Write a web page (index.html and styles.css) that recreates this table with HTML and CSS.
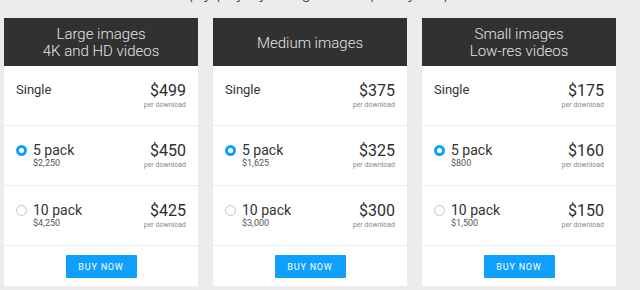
FILE: index.html
```html
<!DOCTYPE html>
<html lang="en">
<head>
    <meta charset="UTF-8">
    <meta name="viewport" content="width=device-width, initial-scale=1.0">
    <title>Pricing</title>
    <link rel="stylesheet" href="styles.css">
</head>
<body>
    <p class="intro">Simply pay by image size, quality, or pack</p>

    <div class="plans">
        <div class="plan">
            <div class="plan-head">Large images<br>4K and HD videos</div>
            <div class="option">
                <div class="option-name">Single</div>
                <div class="price"><span class="amount">$499</span><span class="unit">per download</span></div>
            </div>
            <div class="option">
                <span class="radio checked"></span>
                <div class="pack"><span class="pack-name">5 pack</span><span class="pack-total">$2,250</span></div>
                <div class="price"><span class="amount">$450</span><span class="unit">per download</span></div>
            </div>
            <div class="option">
                <span class="radio"></span>
                <div class="pack"><span class="pack-name">10 pack</span><span class="pack-total">$4,250</span></div>
                <div class="price"><span class="amount">$425</span><span class="unit">per download</span></div>
            </div>
            <div class="plan-foot"><button class="buy">BUY NOW</button></div>
        </div>

        <div class="plan">
            <div class="plan-head">Medium images</div>
            <div class="option">
                <div class="option-name">Single</div>
                <div class="price"><span class="amount">$375</span><span class="unit">per download</span></div>
            </div>
            <div class="option">
                <span class="radio checked"></span>
                <div class="pack"><span class="pack-name">5 pack</span><span class="pack-total">$1,625</span></div>
                <div class="price"><span class="amount">$325</span><span class="unit">per download</span></div>
            </div>
            <div class="option">
                <span class="radio"></span>
                <div class="pack"><span class="pack-name">10 pack</span><span class="pack-total">$3,000</span></div>
                <div class="price"><span class="amount">$300</span><span class="unit">per download</span></div>
            </div>
            <div class="plan-foot"><button class="buy">BUY NOW</button></div>
        </div>

        <div class="plan">
            <div class="plan-head">Small images<br>Low-res videos</div>
            <div class="option">
                <div class="option-name">Single</div>
                <div class="price"><span class="amount">$175</span><span class="unit">per download</span></div>
            </div>
            <div class="option">
                <span class="radio checked"></span>
                <div class="pack"><span class="pack-name">5 pack</span><span class="pack-total">$800</span></div>
                <div class="price"><span class="amount">$160</span><span class="unit">per download</span></div>
            </div>
            <div class="option">
                <span class="radio"></span>
                <div class="pack"><span class="pack-name">10 pack</span><span class="pack-total">$1,500</span></div>
                <div class="price"><span class="amount">$150</span><span class="unit">per download</span></div>
            </div>
            <div class="plan-foot"><button class="buy">BUY NOW</button></div>
        </div>
    </div>
</body>
</html>
```

FILE: styles.css
```css
:root {
    --bg-color: #ececec;
    --card-bg: #ffffff;
    --head-bg: #313131;
    --head-text: #e4e4e4;
    --text-primary: #333333;
    --text-muted: #8a8a8a;
    --border-color: #ececec;
    --accent: #0ea0fc;
}

* {
    margin: 0;
    padding: 0;
    box-sizing: border-box;
    font-family: Roboto, "Liberation Sans", sans-serif;
}

body {
    background-color: var(--bg-color);
    color: var(--text-primary);
    padding: 0 4px;
    overflow: hidden;
}

.intro {
    margin-top: -17px;
    height: 18px;
    font-size: 18px;
    line-height: 18px;
    font-weight: 300;
    text-align: center;
    color: #444;
}

.plans {
    display: grid;
    grid-template-columns: repeat(3, 194px);
    column-gap: 15px;
    margin-top: 17px;
}

.plan {
    background-color: var(--card-bg);
}

.plan-head {
    height: 48px;
    background-color: var(--head-bg);
    color: var(--head-text);
    font-size: 15px;
    font-weight: 300;
    line-height: 17px;
    text-align: center;
    display: flex;
    align-items: center;
    justify-content: center;
    padding-top: 2px;
}

.option {
    height: 60px;
    border-bottom: 1px solid var(--border-color);
    display: flex;
    align-items: flex-start;
    padding: 16px 12px 0 12px;
}

.option-name {
    font-size: 13px;
    line-height: 16px;
    flex: 1;
}

.radio {
    width: 11px;
    height: 11px;
    margin-top: 3px;
    margin-right: 6px;
    border-radius: 50%;
    border: 1px solid #c4c4c4;
    flex-shrink: 0;
}

.radio.checked {
    border: 3px solid var(--accent);
}

.pack {
    flex: 1;
    display: flex;
    flex-direction: column;
}

.pack-name {
    font-size: 14px;
    line-height: 16px;
}

.pack-total {
    font-size: 9px;
    line-height: 10px;
    color: #555;
}

.price {
    display: flex;
    flex-direction: column;
    align-items: flex-end;
}

.amount {
    font-size: 16px;
    line-height: 18px;
    color: #2e2e2e;
}

.unit {
    font-size: 7px;
    line-height: 10px;
    color: var(--text-muted);
}

.plan-foot {
    height: 40px;
    display: flex;
    justify-content: center;
    padding-top: 9px;
}

.buy {
    width: 71px;
    height: 23px;
    border: none;
    border-radius: 1px;
    background-color: var(--accent);
    color: #ffffff;
    font-size: 9px;
    letter-spacing: 0.8px;
    cursor: pointer;
}
```
